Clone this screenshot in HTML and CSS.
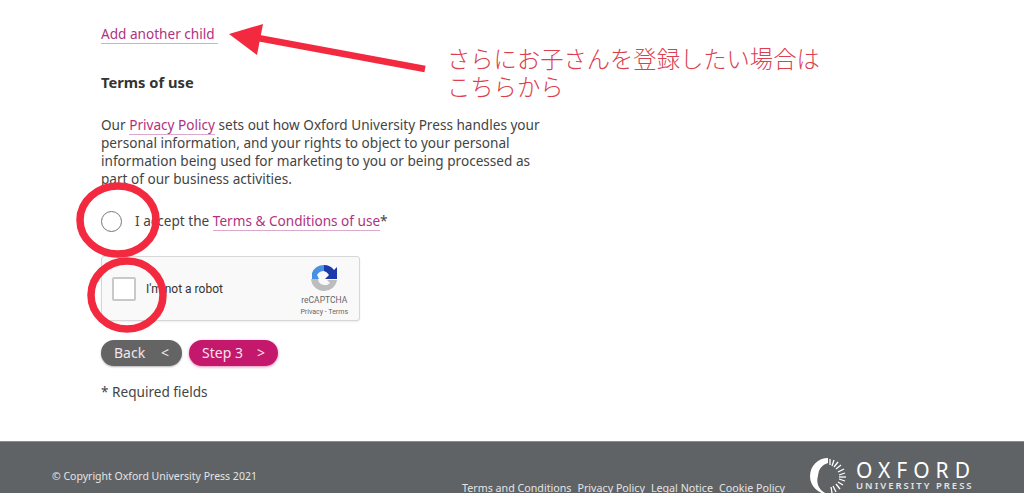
FILE: index.html
```html
<!DOCTYPE html>
<html lang="en">
<head>
    <meta charset="UTF-8">
    <title>Register</title>
    <link rel="stylesheet" href="styles.css">
</head>
<body>
    <div class="page">
        <main class="content">
            <p class="add-child"><a href="#">Add another child&nbsp;</a></p>
            <h2>Terms of use</h2>
            <p class="policy">Our <a href="#">Privacy Policy</a> sets out how Oxford University Press handles your personal information, and your rights to object to your personal information being used for marketing to you or being processed as part of our business activities.</p>

            <div class="accept">
                <span class="radio"></span>
                <span>I accept the <a href="#">Terms &amp; Conditions of use</a>*</span>
            </div>

            <div class="captcha">
                <span class="captcha-box"></span>
                <span class="captcha-label">I'm not a robot</span>
                <div class="captcha-brand">
                    <svg width="28" height="28" viewBox="0 0 28 28">
                        <path d="M14 1 A13 13 0 0 0 2 9 L2 15 L9 15 L7 11 A8 8 0 0 1 14 7 L17 4 Z" fill="#4a90e2"/>
                        <path d="M14 1 A13 13 0 0 1 24 6 L27 3 L27 15 L15 15 L19 11 A8 8 0 0 0 14 7 Z" fill="#1c3aa9"/>
                        <path d="M1 15 L8 15 A7 7 0 0 0 20 19 L17 16 L27 16 A13 13 0 0 1 14 27 A13 13 0 0 1 1 15 Z" fill="#bdbdbd"/>
                    </svg>
                    <span class="captcha-name">reCAPTCHA</span>
                    <span class="captcha-links">Privacy - Terms</span>
                </div>
            </div>

            <div class="buttons">
                <a class="btn btn-back" href="#"><span>Back</span><span>&lt;</span></a>
                <a class="btn btn-next" href="#"><span>Step 3</span><span>&gt;</span></a>
            </div>

            <p class="required">* Required fields</p>
        </main>

        <footer class="footer">
            <p class="copyright">© Copyright Oxford University Press 2021</p>
            <nav class="footer-links">
                <a href="#">Terms and Conditions</a>
                <a href="#">Privacy Policy</a>
                <a href="#">Legal Notice</a>
                <a href="#">Cookie Policy</a>
            </nav>
            <div class="logo">
                <svg width="38" height="38" viewBox="0 0 38 38">
                    <path d="M19 1 A18 18 0 1 0 19 37 A14 14 0 0 1 9 19 A13 13 0 0 1 19 6 Z" fill="#fff"/>
                    <g stroke="#fff" stroke-width="1.3" fill="none">
                        <path d="M21 2 L21 8"/><path d="M25 3 L23 9"/><path d="M29 5 L25 10"/><path d="M32 8 L27 12"/>
                        <path d="M35 12 L29 15"/><path d="M36 16 L30 18"/><path d="M37 20 L30 20"/><path d="M36 24 L30 22"/>
                        <path d="M34 28 L29 25"/><path d="M31 32 L27 27"/><path d="M27 35 L24 29"/><path d="M23 36 L22 30"/>
                    </g>
                </svg>
                <div class="logo-text">
                    <span class="logo-oxford">OXFORD</span>
                    <span class="logo-press">UNIVERSITY PRESS</span>
                </div>
            </div>
        </footer>

        <!-- red notes drawn over the screenshot -->
        <svg class="marks" width="1024" height="493" viewBox="0 0 1024 493">
            <path d="M258 38 L425 69" stroke="#f2293f" stroke-width="6.5" fill="none"/>
            <path d="M229 34 L263 24 L257 55 Z" fill="#f2293f"/>
            <ellipse cx="118" cy="220" rx="38" ry="34" stroke="#f2293f" stroke-width="7.5" fill="none"/>
            <ellipse cx="127" cy="295" rx="36" ry="34" stroke="#f2293f" stroke-width="7.5" fill="none"/>
        </svg>
        <p class="note">さらにお子さんを登録したい場合はこちらから</p>
    </div>
</body>
</html>
```

FILE: styles.css
```css
* {
    box-sizing: border-box;
}

html, body {
    margin: 0;
    height: 493px;
    overflow: hidden;
}

body {
    font-family: "Noto Sans", "Open Sans", sans-serif;
    font-size: 13.6px;
    line-height: 18px;
    color: #444;
    background: #fff;
}

.page {
    position: relative;
    width: 1024px;
    height: 493px;
    overflow: hidden;
}

a {
    color: #b0327f;
    text-decoration: none;
    border-bottom: 1px solid #dba9cd;
}

.content {
    height: 441px;
    padding: 25px 0 0 101px;
}

.add-child {
    margin: 0;
}

h2 {
    margin: 30px 0 0;
    font-size: 14.7px;
    line-height: 18px;
    font-weight: 700;
    color: #333;
}

.policy {
    width: 445px;
    margin: 25px 0 0;
}

.accept {
    display: flex;
    align-items: center;
    gap: 13px;
    margin: 13px 0 0;
    height: 40px;
}

.radio {
    width: 21px;
    height: 21px;
    border: 1.5px solid #777;
    border-radius: 50%;
}

.captcha {
    display: flex;
    align-items: center;
    width: 259px;
    height: 65px;
    margin-top: 15px;
    padding: 0 11px 0 10px;
    background: #f9f9f9;
    border: 1px solid #d6d6d6;
    border-radius: 3px;
    box-shadow: 0 1px 2px rgba(0, 0, 0, 0.08);
}

.captcha-box {
    width: 24px;
    height: 24px;
    background: #fff;
    border: 2px solid #c8c8c8;
    border-radius: 2px;
}

.captcha-label {
    margin-left: 10px;
    font-family: Roboto, sans-serif;
    font-size: 12px;
    color: #333;
}

.captcha-brand {
    display: flex;
    flex-direction: column;
    align-items: center;
    margin: 4px 0 0 auto;
    color: #666;
    font-family: Roboto, sans-serif;
}

.captcha-name {
    margin-top: 3px;
    font-size: 8.5px;
    line-height: 11px;
}

.captcha-links {
    font-size: 7px;
    line-height: 12px;
}

.buttons {
    display: flex;
    gap: 7px;
    margin-top: 19px;
}

.btn {
    display: flex;
    justify-content: space-between;
    align-items: center;
    height: 26px;
    padding: 0 13px;
    border: 0;
    border-radius: 13px;
    font-size: 14px;
    color: #f3e4ee;
}

.btn-back {
    width: 81px;
    background: #646464;
    box-shadow: 0 1px 2px rgba(0, 0, 0, 0.3);
}

.btn-next {
    width: 89px;
    background: #c4186c;
    box-shadow: 0 1px 3px rgba(196, 24, 108, 0.5);
}

.required {
    margin: 17px 0 0;
}

.footer {
    position: relative;
    height: 60px;
    background: #5f6365;
    border-top: 1px solid #8a8d8f;
    color: #e4e5e5;
}

.copyright {
    position: absolute;
    left: 52px;
    top: 25px;
    margin: 0;
    font-size: 10.5px;
}

.footer-links {
    position: absolute;
    left: 462px;
    top: 37px;
    display: flex;
    gap: 6px;
    font-size: 10.7px;
}

.footer-links a {
    color: #e4e5e5;
    border: 0;
}

.logo {
    position: absolute;
    left: 809px;
    top: 15px;
    display: flex;
    gap: 9px;
}

.logo-text {
    display: flex;
    flex-direction: column;
    margin-top: 3px;
}

.logo-oxford {
    font-size: 21px;
    line-height: 20px;
    letter-spacing: 6px;
    color: #fff;
}

.logo-press {
    font-size: 9.5px;
    line-height: 11px;
    letter-spacing: 2px;
    font-weight: 600;
    color: #e4e5e5;
}

.marks {
    position: absolute;
    left: 0;
    top: 0;
    pointer-events: none;
}

.note {
    position: absolute;
    left: 447px;
    top: 44px;
    width: 385px;
    margin: 0;
    font-family: "Noto Sans CJK JP", sans-serif;
    font-size: 23.3px;
    line-height: 28px;
    font-weight: 300;
    color: #dc3f50;
}
```
